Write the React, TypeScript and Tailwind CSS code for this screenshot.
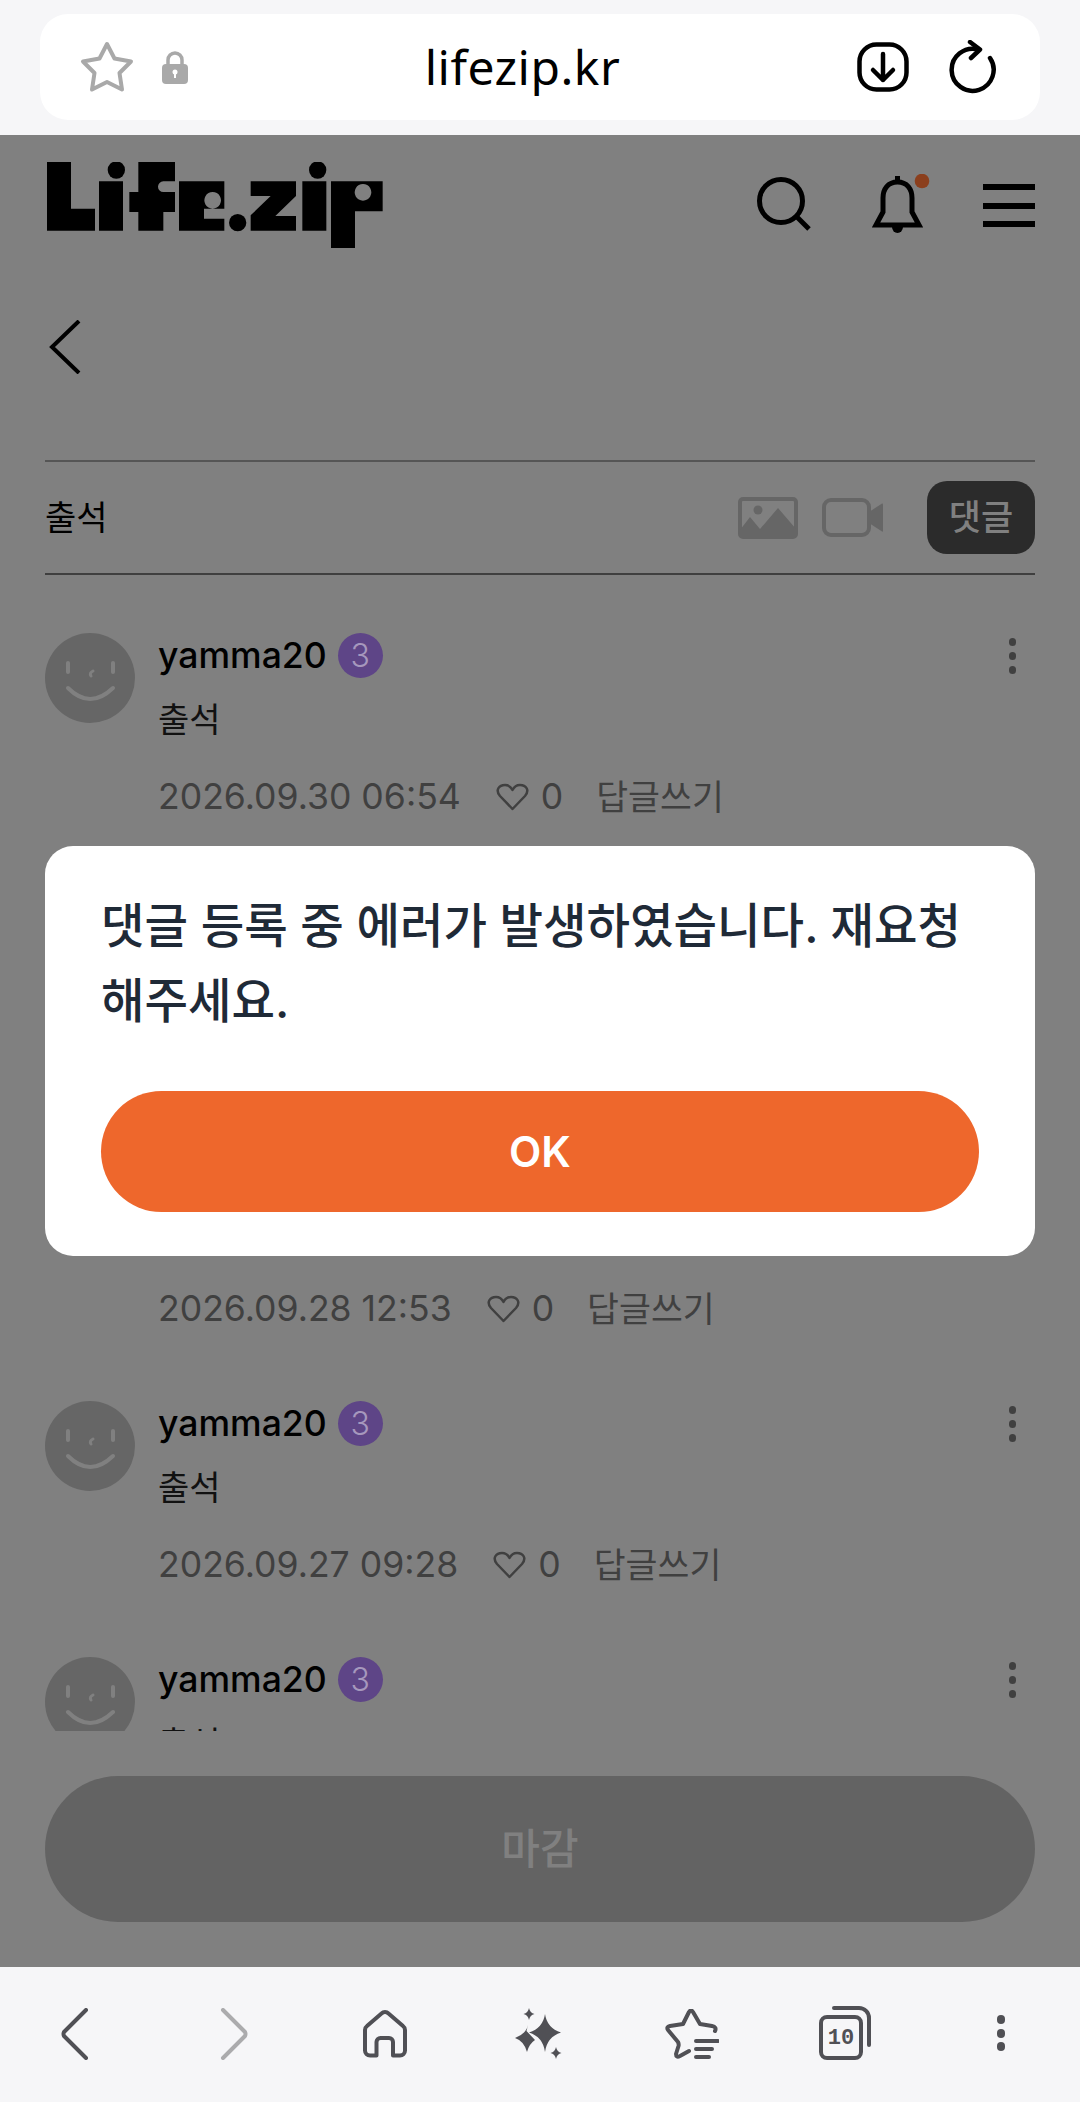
const comments = [
  { id: 1, date: "2026.09.30 06:54" },
  { id: 2, date: "2026.09.29 08:12" },
  { id: 3, date: "2026.09.28 12:53" },
  { id: 4, date: "2026.09.27 09:28" },
  { id: 5, date: "2026.09.26 07:41" },
];

function Logo() {
  return (
    <svg className="ml-[2px]" width="336" height="86" viewBox="141 67 1008 258" fill="#000">
      <path d="M141 67h72v140h72v66H141z" />
      <path d="M297 125h72v148h-72z" />
      <circle cx="349" cy="91" r="26" />
      <path d="M415 67h110v58h-35a16 16 0 0 0 0 32h35v60h-35v56h-75v-56h-27v-60h27z" />
      <path fillRule="evenodd" d="M537 125h136v82h-61v30h61v36H537z M638 157a25 25 0 1 0 0.01 0z" />
      <circle cx="713" cy="249" r="26" />
      <path d="M752 125h136v44l-62 60h62v44H752v-46l60-58h-60z" />
      <path d="M907 125h72v148h-72z" />
      <circle cx="953" cy="91" r="26" />
      <path fillRule="evenodd" d="M993 125h155v90h-83v110h-72z M1089 133a25 25 0 1 0 0.01 0z" />
    </svg>
  );
}

function TopBar() {
  return (
    <div className="h-[135px] bg-[#f6f6f8] px-[40px] pt-[14px]">
      <div className="flex h-[106px] items-center justify-between rounded-[28px] bg-white pl-[40px] pr-[44px]">
        <div className="flex items-center gap-[28px]">
          <svg width="54" height="52" viewBox="0 0 54 52" fill="none" stroke="#a9a9a9" strokeWidth="4" strokeLinejoin="round">
            <path d="M27 3l7.5 14.5 16.5 3-11.5 11.5 2.5 16.5-15-7.5-15 7.5 2.5-16.5L3 20.500l16.500-3z" />
          </svg>
          <svg width="26" height="34" viewBox="0 0 26 34">
            <path d="M6 16V10a7 7 0 0 1 14 0v6" fill="none" stroke="#a9a9a9" strokeWidth="3.500" />
            <rect x="0" y="14" width="26" height="20" rx="4" fill="#a9a9a9" />
            <circle cx="13" cy="22" r="2.500" fill="#fff" />
            <rect x="12" y="22" width="2" height="6" fill="#fff" />
          </svg>
        </div>
        <span className="font-['Noto_Sans','sans-serif'] text-[48px] leading-none tracking-[0.5px] text-black">lifezip.kr</span>
        <div className="flex items-center gap-[40px]">
          <svg width="52" height="50" viewBox="0 0 52 50" fill="none" stroke="#000" strokeWidth="4.500" strokeLinecap="round" strokeLinejoin="round">
            <rect x="2.500" y="2.500" width="47" height="45" rx="17" />
            <path d="M26 12v26M16 28l10 10 10-10" />
          </svg>
          <svg width="47" height="55" viewBox="0 0 47 55" fill="none" stroke="#000" strokeWidth="4.500" strokeLinecap="round" strokeLinejoin="round">
            <path d="M41 18A21 21 0 1 1 29 9.500" />
            <path d="M21 2l10 7.500-9 8.500" />
          </svg>
        </div>
      </div>
    </div>
  );
}

function SiteHeader() {
  return (
    <div className="flex items-start justify-between pt-[27px]">
      <Logo />
      <div className="mt-[12px] flex items-center">
        <svg width="56" height="56" viewBox="0 0 56 56" fill="none" stroke="#000" strokeWidth="5">
          <circle cx="25" cy="25" r="21.500" />
          <path d="M41 41l12 12" />
        </svg>
        <svg className="ml-[59px]" width="59" height="60" viewBox="0 0 59 60" fill="none">
          <path d="M26.500 2v6" stroke="#000" strokeWidth="5" />
          <path d="M26.500 8C17 8 12 15 12 24v14L5 51h43l-7-13V24C41 15 36 8 26.500 8z" stroke="#000" strokeWidth="5" />
          <path d="M21 53a5.500 6 0 0 0 11 0z" fill="#000" />
          <circle cx="51" cy="7" r="7.300" fill="#8b3f1d" />
        </svg>
        <div className="ml-[53px] mt-[3px] flex h-[43px] w-[52px] flex-col justify-between">
          <div className="h-[6px] bg-black" />
          <div className="h-[6px] bg-black" />
          <div className="h-[6px] bg-black" />
        </div>
      </div>
    </div>
  );
}

function Avatar() {
  return (
    <svg className="shrink-0" width="90" height="90" viewBox="0 0 90 90" fill="none">
      <circle cx="45" cy="45" r="45" fill="#666666" />
      <g stroke="#808080" strokeWidth="4" strokeLinecap="round">
        <path d="M23 30v9M68 30v9" />
        <path d="M48 38q-4 2-2 5" strokeWidth="3" />
        <path d="M23 55q22 22 45 0" />
      </g>
    </svg>
  );
}

function CommentRow({ date }: { date: string }) {
  return (
    <div className="flex h-[256px] gap-[23px]">
      <Avatar />
      <div className="min-w-0 flex-1">
        <div className="flex h-[45px] items-center justify-between">
          <div className="flex items-center gap-[11px]">
            <span className="text-[35.6px] font-medium leading-none text-black">yamma20</span>
            <span className="flex h-[45px] w-[45px] items-center justify-center rounded-full bg-[#5e4587] text-[32px] font-light leading-none text-[#a698bd]">3</span>
          </div>
          <div className="mr-[19px] flex h-[36px] flex-col justify-between">
            <div className="h-[8px] w-[7px] rounded-full bg-[#404040]" />
            <div className="h-[8px] w-[7px] rounded-full bg-[#404040]" />
            <div className="h-[8px] w-[7px] rounded-full bg-[#404040]" />
          </div>
        </div>
        <div className="mt-[22px] text-[34px] leading-[40px] text-[#111111]">출석</div>
        <div className="mt-[37px] flex items-center text-[35.6px] leading-[40px] text-[#404040]">
          <span>{date}</span>
          <svg className="ml-[35px]" width="33" height="28" viewBox="0 0 33 28" fill="none" stroke="#404040" strokeWidth="2.500" strokeLinejoin="round">
            <path d="M16.500 26L4 13C-1 7 3 2 9 2c3 0 6 2 7.500 5C18 4 21 2 24 2c6 0 10 5 5 11z" />
          </svg>
          <span className="ml-[12px]">0</span>
          <span className="ml-[33px] text-[34.7px]">답글쓰기</span>
        </div>
      </div>
    </div>
  );
}

function BottomBar() {
  return (
    <div className="flex h-[135px] items-start bg-[#f6f6f8] pl-[61px] pt-[41px]">
      <svg width="28" height="52" viewBox="0 0 28 52" fill="none" stroke="#505055" strokeWidth="4" strokeLinecap="round" strokeLinejoin="round">
        <path d="M25 2L3 24q-1 2 0 4l22 22" />
      </svg>
      <svg className="ml-[131px]" width="28" height="52" viewBox="0 0 28 52" fill="none" stroke="#ababad" strokeWidth="4" strokeLinecap="round" strokeLinejoin="round">
        <path d="M3 2l22 22q1 2 0 4L3 50" />
      </svg>
      <svg className="ml-[114px] mt-[2px]" width="46" height="48" viewBox="0 0 46 48" fill="none" stroke="#505055" strokeWidth="4" strokeLinejoin="round">
        <path d="M14.500 45.500H8a5 5 0 0 1-5-5V20a5 5 0 0 1 2-4L19.500 3.500a5 5 0 0 1 7 0L41 16a5 5 0 0 1 2 4v20.500a5 5 0 0 1-5 5h-7V32a4 4 0 0 0-4-4h-8.500a4 4 0 0 0-4 4z" />
      </svg>
      <svg className="ml-[107px]" width="47" height="51" viewBox="0 0 47 51" fill="#505055">
        <path d="M30 6q2 14 16 18.500Q32 29 30 44q-2-15-16-19.500Q28 20 30 6z" />
        <path d="M14 0q1 5 5.500 6Q15 7 14 12q-1-5-5.500-6Q13 5 14 0z" />
        <path d="M41 39q1 5 5.500 6Q42 46 41 51q-1-5-5.500-6Q40 44 41 39z" />
        <path d="M13 17q-2 9-13 13 9 3 12 14 2-8 8-12l-8.500-9z" />
      </svg>
      <svg className="ml-[103px] mt-[1px]" width="54" height="50" viewBox="0 0 54 50" fill="none" stroke="#505055" strokeWidth="4" strokeLinecap="round" strokeLinejoin="round">
        <path d="M50 22q2-4-3-5l-12-2-7-12q-2-3-4 0l-6 12-13 2q-4 1-2 4l10 12q1 2 .5 4L11 45q0 4 4 2l9-5" />
        <path d="M31 32h22M31 40h16M31 48h13" />
      </svg>
      <svg className="ml-[100px] -mt-[2px]" width="54" height="54" viewBox="0 0 54 54" fill="none" stroke="#505055" strokeWidth="4" strokeLinecap="round">
        <rect x="2" y="11" width="40" height="41" rx="6" />
        <path d="M15 2h25a10 10 0 0 1 10 10v27" />
        <text x="22" y="38" textAnchor="middle" fill="#505055" stroke="none" className="font-['Liberation_Mono','monospace'] text-[22px] font-bold">10</text>
      </svg>
      <div className="ml-[124px] mt-[7px] flex h-[36px] flex-col justify-between">
        <div className="h-[9px] w-[8px] rounded-full bg-[#505055]" />
        <div className="h-[9px] w-[8px] rounded-full bg-[#505055]" />
        <div className="h-[9px] w-[8px] rounded-full bg-[#505055]" />
      </div>
    </div>
  );
}

export default function App() {
  return (
    <div className="flex h-[2102px] w-[1080px] flex-col overflow-hidden font-['Inter','Noto_Sans_CJK_KR','sans-serif']">
      <TopBar />

      <div className="relative h-[1832px] bg-[#808080] px-[45px]">
        <SiteHeader />

        {/* back */}
        <svg className="ml-[4px] mt-[72px]" width="32" height="54" viewBox="0 0 32 54" fill="none" stroke="#000" strokeWidth="4">
          <path d="M30 1L3 27l27 26" />
        </svg>

        {/* comment form */}
        <div className="mt-[86px] flex h-[115px] items-center justify-between border-y-2 border-t-[#555555] border-b-[#3f3f3f]">
          <span className="text-[34px] leading-none text-black">출석</span>
          <div className="flex items-center">
            <svg width="60" height="42" viewBox="0 0 60 42" fill="none">
              <rect x="2" y="2" width="56" height="38" rx="3" stroke="#666666" strokeWidth="4" />
              <circle cx="20" cy="13" r="4.500" fill="#666666" />
              <path d="M2 33l10-13 10 12 18-21 18 21v8H2z" fill="#666666" />
            </svg>
            <svg className="ml-[24px]" width="62" height="39" viewBox="0 0 62 39" fill="none">
              <rect x="2" y="2" width="45" height="35" rx="7" stroke="#666666" strokeWidth="4" />
              <path d="M47 14l13-8.500q1-.5 1 1V33q0 1-1 .5L47 25z" fill="#666666" />
            </svg>
            <button className="ml-[43px] flex h-[73px] w-[108px] items-center justify-center rounded-[20px] bg-[#2b2b2b] text-[35px] font-medium leading-none text-[#808080]">
              댓글
            </button>
          </div>
        </div>

        {/* comment list */}
        <div className="h-[1156px] overflow-hidden pt-[58px]">
          {comments.map((comment) => (
            <CommentRow key={comment.id} date={comment.date} />
          ))}
        </div>

        <button className="mt-[45px] flex h-[146px] w-full items-center justify-center rounded-full bg-[#636363] text-[42px] font-medium leading-none text-[#808080]">
          마감
        </button>

        {/* alert */}
        <div className="absolute left-[45px] top-[711px] h-[410px] w-[990px] rounded-[28px] bg-white px-[56px] pt-[42px]">
          <p className="text-[47.3px] font-medium leading-[75px] text-[#1f2a37]">
            댓글 등록 중 에러가 발생하였습니다. 재요청해주세요.
          </p>
          <button className="mt-[53px] flex h-[121px] w-full items-center justify-center rounded-full bg-[#ee672c] text-[42px] font-semibold leading-none text-white">
            OK
          </button>
        </div>
      </div>

      <BottomBar />
    </div>
  );
}
